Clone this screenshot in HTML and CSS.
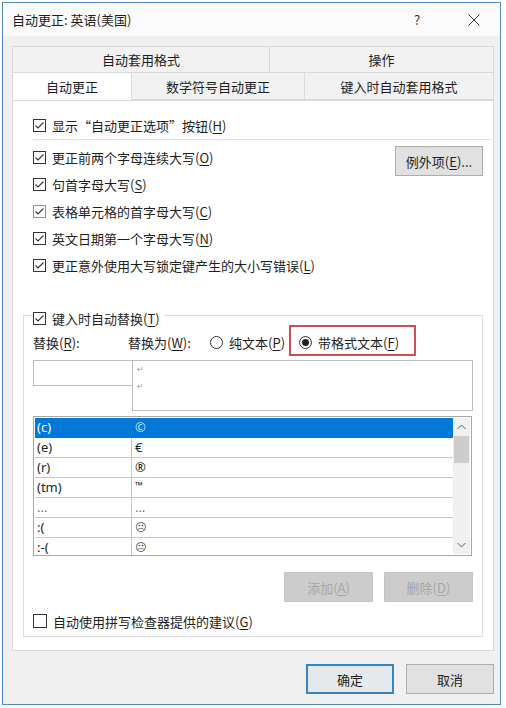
FILE: index.html
```html
<!DOCTYPE html>
<html lang="zh-CN">
<head>
    <meta charset="UTF-8">
    <title>自动更正: 英语(美国)</title>
    <link rel="stylesheet" href="styles.css">
</head>
<body>
    <div class="window">
        <!-- Title bar -->
        <div class="titlebar">
            <span class="title">自动更正: 英语(美国)</span>
            <span class="help">?</span>
            <svg class="close" width="12" height="12" viewBox="0 0 12 12">
                <path d="M0.5 0.5 L11.5 11.5 M11.5 0.5 L0.5 11.5" stroke="#333" stroke-width="1" fill="none"/>
            </svg>
        </div>

        <!-- Tabs -->
        <div class="tabs tabs-back">
            <div class="tab">自动套用格式</div>
            <div class="tab">操作</div>
        </div>
        <div class="tabs tabs-front">
            <div class="tab active">自动更正</div>
            <div class="tab">数学符号自动更正</div>
            <div class="tab">键入时自动套用格式</div>
        </div>

        <div class="panel">
            <div class="opt opt-first">
                <span class="check on"></span>显示“自动更正选项”按钮(<u>H</u>)
            </div>
            <div class="sep"></div>

            <div class="opt-block">
                <div class="opt-list">
                    <div class="opt"><span class="check on"></span>更正前两个字母连续大写(<u>O</u>)</div>
                    <div class="opt"><span class="check on"></span>句首字母大写(<u>S</u>)</div>
                    <div class="opt"><span class="check on hover"></span>表格单元格的首字母大写(<u>C</u>)</div>
                    <div class="opt"><span class="check on"></span>英文日期第一个字母大写(<u>N</u>)</div>
                    <div class="opt"><span class="check on"></span>更正意外使用大写锁定键产生的大小写错误(<u>L</u>)</div>
                </div>
                <button class="btn btn-except">例外项(<u>E</u>)...</button>
            </div>

            <!-- Replace as you type -->
            <div class="group">
                <div class="legend"><span class="check on"></span>键入时自动替换(<u>T</u>)</div>

                <div class="replace-labels">
                    <span class="lbl-replace">替换(<u>R</u>):</span>
                    <span class="lbl-with">替换为(<u>W</u>):</span>
                    <span class="radio-opt"><span class="radio"></span>纯文本(<u>P</u>)</span>
                    <span class="radio-opt marked"><span class="radio on"></span>带格式文本(<u>F</u>)</span>
                </div>

                <div class="replace-inputs">
                    <div class="input-from"></div>
                    <div class="input-to">
                        <span class="ret">↵</span>
                        <span class="ret">↵</span>
                    </div>
                </div>

                <div class="list">
                    <div class="list-rows">
                        <div class="row selected"><span class="c1">(c)</span><span class="c2">©</span></div>
                        <div class="row"><span class="c1">(e)</span><span class="c2">€</span></div>
                        <div class="row"><span class="c1">(r)</span><span class="c2">®</span></div>
                        <div class="row"><span class="c1">(tm)</span><span class="c2 tm">™</span></div>
                        <div class="row"><span class="c1 dots">...</span><span class="c2 dots">…</span></div>
                        <div class="row"><span class="c1">:(</span><span class="c2 face">☹</span></div>
                        <div class="row"><span class="c1">:-(</span><span class="c2 face">☹</span></div>
                    </div>
                    <div class="scrollbar">
                        <svg class="arrow" width="9" height="6" viewBox="0 0 9 6"><path d="M0.5 5 L4.5 1 L8.5 5" stroke="#606060" fill="none"/></svg>
                        <div class="thumb"></div>
                        <div class="track"></div>
                        <svg class="arrow" width="9" height="6" viewBox="0 0 9 6"><path d="M0.5 1 L4.5 5 L8.5 1" stroke="#606060" fill="none"/></svg>
                    </div>
                </div>

                <div class="list-buttons">
                    <button class="btn disabled">添加(<u>A</u>)</button>
                    <button class="btn disabled">删除(<u>D</u>)</button>
                </div>

                <div class="opt opt-last"><span class="check"></span>自动使用拼写检查器提供的建议(<u>G</u>)</div>
            </div>
        </div>

        <div class="footer">
            <button class="btn default">确定</button>
            <button class="btn">取消</button>
        </div>
    </div>
</body>
</html>
```

FILE: styles.css
```css
body {
    margin: 0;
    background-color: #fff;
    font-family: "Noto Sans CJK SC", "Noto Sans", sans-serif;
    font-size: 13px;
    color: #1e1e1e;
}
u {
    text-decoration-thickness: 1px;
    text-underline-offset: 2px;
}
.window {
    box-sizing: border-box;
    width: 499px;
    height: 703px;
    margin: 2px 0 0 2px;
    border: 1px solid #4f8bb4;
    background-color: #f0f0f0;
}

/* Title bar */
.titlebar {
    display: flex;
    align-items: center;
    height: 33px;
    padding-left: 9px;
    background-color: #fbfbfb;
}
.title {
    flex: 1;
}
.help {
    width: 12px;
    margin-right: 42px;
    color: #333;
}
.close {
    margin-right: 20px;
}

/* Tabs */
.tabs {
    display: grid;
    margin: 0 6px 0 9px;
    height: 27px;
}
.tabs-back {
    margin-top: 10px;
    grid-template-columns: 258px 1fr;
}
.tabs-front {
    grid-template-columns: 120px 173px 1fr;
}
.tab {
    display: flex;
    align-items: center;
    justify-content: center;
    border: 1px solid #dadada;
    margin-left: -1px;
    margin-top: -1px;
    background-color: #f2f2f2;
}
.tabs-back .tab {
    margin-top: 0;
}
.tab:first-child {
    margin-left: 0;
}
.tab.active {
    background-color: #fff;
    border-bottom: none;
    position: relative;
    z-index: 1;
}

/* Main panel */
.panel {
    box-sizing: border-box;
    height: 551px;
    margin: 0 6px 0 9px;
    border: 1px solid #dadada;
    background-color: #fff;
    display: flex;
    flex-direction: column;
}
.opt {
    display: flex;
    align-items: center;
    height: 27px;
}
.opt-first {
    height: 20px;
    margin-top: 14px;
    padding-left: 20px;
}
.sep {
    height: 1px;
    margin: 4px 2px 0 20px;
    background-color: #e3e3e3;
}
.opt-block {
    display: flex;
    margin-top: 4px;
    padding-left: 20px;
}
.opt-list {
    flex: 1;
}
.check {
    box-sizing: border-box;
    width: 13px;
    height: 13px;
    border: 1px solid #333;
    margin-right: 6px;
    flex-shrink: 0;
    background-position: center;
    background-repeat: no-repeat;
}
.check.on {
    background-image: url("data:image/svg+xml;utf8,<svg xmlns='http://www.w3.org/2000/svg' width='11' height='11' viewBox='0 0 11 11'><path d='M1.5 5.5 L4 8 L9.5 2.5' stroke='%23333' stroke-width='1.1' fill='none'/></svg>");
}
.check.hover {
    border-color: #5aa6bf;
}
.btn {
    box-sizing: border-box;
    height: 30px;
    padding: 0;
    border: 1px solid #adadad;
    background-color: #e1e1e1;
    font-family: inherit;
    font-size: 13px;
    color: #1e1e1e;
}
.btn-except {
    width: 88px;
    margin: 2px 10px 0 0;
}

/* Group box */
.group {
    box-sizing: border-box;
    height: 322px;
    margin: 36px 10px 0 10px;
    padding: 0 9px;
    border: 1px solid #dcdcdc;
}
.legend {
    display: flex;
    align-items: center;
    width: fit-content;
    height: 20px;
    margin-top: -8px;
    padding-right: 4px;
    background-color: #fff;
}
.replace-labels {
    display: flex;
    align-items: center;
    height: 31px;
    margin-top: -3px;
}
.lbl-replace {
    width: 95px;
    padding-top: 3px;
}
.lbl-with {
    width: 82px;
    padding-top: 3px;
}
.radio-opt {
    display: flex;
    align-items: center;
    padding-top: 3px;
}
.radio {
    box-sizing: border-box;
    width: 13px;
    height: 13px;
    border: 1px solid #333;
    border-radius: 50%;
    margin-right: 6px;
    display: flex;
    align-items: center;
    justify-content: center;
}
.radio.on::after {
    content: "";
    width: 7px;
    height: 7px;
    border-radius: 50%;
    background-color: #222;
}
.radio-opt.marked {
    box-sizing: border-box;
    height: 31px;
    margin-left: 4px;
    padding: 3px 10px 0 8px;
    width: 127px;
    border: 2px solid #c45352;
}

.replace-inputs {
    display: flex;
    margin-top: 4px;
}
.input-from {
    box-sizing: border-box;
    width: 100px;
    height: 26px;
    border: 1px solid #bdbdbd;
}
.input-to {
    box-sizing: border-box;
    width: 341px;
    height: 51px;
    margin-left: -1px;
    padding: 4px 0 0 4px;
    border: 1px solid #bdbdbd;
    display: flex;
    flex-direction: column;
    gap: 7px;
}
.ret {
    font-family: "DejaVu Sans", sans-serif;
    font-size: 8px;
    line-height: 10px;
    color: #a0a0a0;
}

/* Replacement list */
.list {
    box-sizing: border-box;
    display: flex;
    width: 439px;
    height: 140px;
    margin-top: 5px;
    padding: 1px;
    border: 1px solid #a8a8a8;
    overflow: hidden;
}
.list-rows {
    flex: 1;
}
.row {
    display: flex;
    height: 19px;
    border-bottom: 1px solid #c8c8c8;
    font-family: "Noto Sans", sans-serif;
    line-height: 19px;
}
.row.selected {
    background-color: #0078d7;
    color: #fff;
    border-bottom-color: #0078d7;
}
.row.selected .c2 {
    color: #c8e4ff;
}
.c1 {
    box-sizing: border-box;
    width: 97px;
    padding-left: 2px;
    border-right: 1px solid #c8c8c8;
}
.row.selected .c1 {
    border-right-color: #0078d7;
}
.c2 {
    padding-left: 3px;
}
.tm {
    font-size: 10px;
    line-height: 14px;
}
.dots {
    color: #777;
}
.face {
    font-family: "DejaVu Sans", sans-serif;
    font-size: 11px;
    color: #444;
}
.scrollbar {
    width: 17px;
    background-color: #f0f0f0;
    display: flex;
    flex-direction: column;
    align-items: center;
}
.arrow {
    margin: 6px 0;
}
.thumb {
    width: 15px;
    height: 27px;
    background-color: #cdcdcd;
}
.track {
    flex: 1;
}

.list-buttons {
    display: flex;
    justify-content: flex-end;
    gap: 11px;
    margin-top: 16px;
}
.btn.disabled {
    width: 89px;
    border-color: #c4c4c4;
    background-color: #cccccc;
    color: #a6a6a6;
}
.opt-last {
    height: 20px;
    margin-top: 9px;
}
.opt-last .check {
    width: 14px;
    height: 14px;
}

/* Footer buttons */
.footer {
    display: flex;
    justify-content: flex-end;
    gap: 12px;
    margin-top: 13px;
    padding-right: 6px;
}
.footer .btn {
    width: 88px;
}
.btn.default {
    border: 2px solid #3a83bd;
    background-color: #e5e9ec;
}
```
